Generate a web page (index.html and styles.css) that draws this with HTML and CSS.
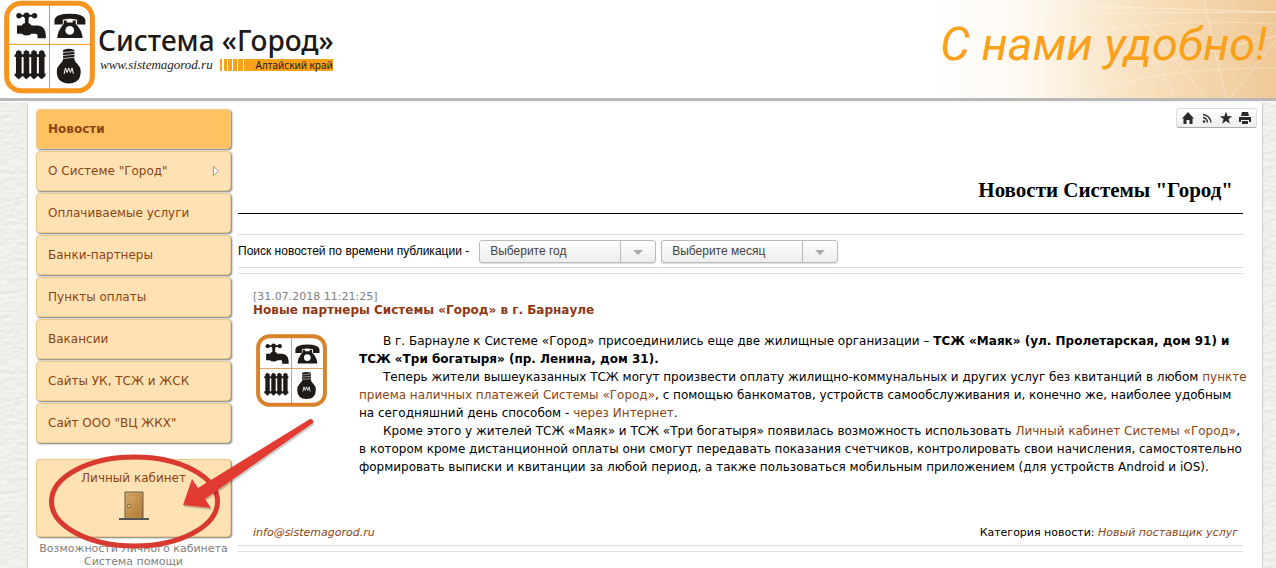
FILE: index.html
```html
<!DOCTYPE html>
<html lang="ru">
<head>
    <meta charset="UTF-8">
    <meta name="viewport" content="width=device-width, initial-scale=1.0">
    <title>Система «Город» - Новости</title>
    <link rel="stylesheet" href="styles.css">
</head>
<body>

<!-- Shared logo -->
<svg class="sprite" width="0" height="0" aria-hidden="true">
    <symbol id="logo" viewBox="12 2 274 280">
        <rect x="20" y="10" width="258" height="264" rx="44" fill="#fff" stroke="currentColor" stroke-width="15"/>
        <path d="M149 14v256M24 134h250" stroke="currentColor" stroke-width="3"/>
        <g fill="#1d1a18">
            <!-- tap -->
            <circle cx="57" cy="48" r="8"/><circle cx="80" cy="47" r="9"/><circle cx="104" cy="48" r="8"/>
            <path d="M57 45h47v6H57zM75 52h11v22H75z"/>
            <path d="M51 77h15q3-7 14-7t15 7h18q24 2 25 29v10h-25v-8q0-7-8-6H95q-5 5-15 5t-14-5H51z"/>
            <!-- phone -->
            <path d="M164 74V60q4-18 46-18t47 18v14h-25V60q-21-6-43 0v14z"/>
            <path d="M192 62h9v6h18v-6h9v10q19 20 21 43h-77q2-23 20-43z"/>
            <!-- radiator -->
            <path d="M44 164h93v8H44zM44 222h93v8H44z"/>
            <path d="M48 156l8-5 9 5v76l-9 7-8-7zM71 156l8-5 9 5v76l-9 7-8-7zM94 156l8-5 9 5v76l-9 7-8-7zM117 156l8-5 9 5v76l-9 7-8-7z"/>
            <!-- bulb -->
            <path d="M190 151q17-7 34 0v29q1 6 10 14 9 9 9 22 0 35-36 36-36-1-36-36 0-13 9-22 9-8 10-14z"/>
        </g>
        <circle cx="210" cy="92" r="13" fill="#fff"/>
        <path d="M188 159l38-4M188 168l38-4M188 177l38-4" stroke="#fff" stroke-width="2"/>
        <path d="M193 223l4-18 5 14 5-14 5 14 5-14 4 18" fill="none" stroke="#fff" stroke-width="3"/>
    </symbol>
</svg>

<header class="header">
    <a class="brand" href="#">
        <svg class="brand-logo"><use href="#logo"/></svg>
        <span class="brand-text">
            <span class="brand-name">Система «Город»</span>
            <span class="brand-sub">
                <span class="brand-url">www.sistemagorod.ru</span>
                <span class="brand-region">Алтайский край</span>
            </span>
        </span>
    </a>
    <div class="slogan">
        <svg class="slogan-lines" viewBox="0 0 376 98" preserveAspectRatio="none" fill="none" stroke="#fff" aria-hidden="true">
            <path d="M90 14l286-2M120 4l256 8M226 0l80 98M232 20l44 78M304 0q8 40 22 98M330 98L376 40M240 66l136-30" opacity=".4"/>
            <path d="M130 42q120-26 246-18M180 98q60-30 196-30" opacity=".3"/>
        </svg>
        <span class="slogan-text">С нами удобно!</span>
    </div>
</header>

<div class="page">
    <aside class="sidebar">
        <nav class="menu">
            <a class="menu-item active" href="#">Новости</a>
            <a class="menu-item" href="#">О Системе "Город"
                <svg width="8" height="12" viewBox="0 0 8 12"><path d="M1.500 1.500v9l5-4.500z" fill="#fff" stroke="#999"/></svg>
            </a>
            <a class="menu-item" href="#">Оплачиваемые услуги</a>
            <a class="menu-item" href="#">Банки-партнеры</a>
            <a class="menu-item" href="#">Пункты оплаты</a>
            <a class="menu-item" href="#">Вакансии</a>
            <a class="menu-item" href="#">Сайты УК, ТСЖ и ЖСК</a>
            <a class="menu-item" href="#">Сайт ООО "ВЦ ЖКХ"</a>
        </nav>

        <div class="cabinet-wrap">
            <a class="cabinet" href="#">
                Личный кабинет
                <svg width="30" height="30" viewBox="0 0 30 30">
                    <defs>
                        <linearGradient id="door" x2="1" y2="1">
                            <stop offset="0" stop-color="#dcb072"/>
                            <stop offset="1" stop-color="#a87430"/>
                        </linearGradient>
                    </defs>
                    <path d="M6 28V1h18v27" fill="url(#door)" stroke="#6b5a45"/>
                    <path d="M9 4h12v22H9z" fill="none" stroke="#c08c48"/>
                    <path d="M0 28h30" stroke="#555" stroke-width="2"/>
                    <circle cx="10" cy="15" r="1.500" fill="#fff3c0" stroke="#8a5e20"/>
                </svg>
            </a>
            <!-- Red pointer over the card -->
            <svg class="pointer" width="280" height="140" viewBox="36 415 280 140" aria-hidden="true">
                <ellipse cx="134.500" cy="501.500" rx="83" ry="44.500" fill="none" stroke="#d93a2f" stroke-width="5"/>
                <path d="M183 505l9-26 6 9 112-69q4 0 3 4L205 499l6 9z" fill="#000" opacity=".2" transform="translate(1 2)"/>
                <path d="M183 505l9-26 6 9 112-69q4 0 3 4L205 499l6 9z" fill="#e23b32"/>
            </svg>
        </div>

        <div class="help">
            <a href="#">Возможности Личного кабинета</a>
            <a href="#">Система помощи</a>
        </div>
    </aside>

    <main class="content">
        <div class="toolbar">
            <a href="#" aria-label="Главная"><svg width="14" height="14" viewBox="0 0 14 14"><path d="M7 1l6 6.500h-1.500V13H8.500V9h-3v4H2.500V7.500H1z"/></svg></a>
            <a href="#" aria-label="RSS"><svg width="14" height="14" viewBox="0 0 14 14"><circle cx="4" cy="10.500" r="1.300"/><path d="M3 6.500q4 .5 4.500 5M3 3.500q7 1 8 8" fill="none" stroke="#2b2b2b" stroke-width="1.300"/></svg></a>
            <a href="#" aria-label="Избранное"><svg width="14" height="14" viewBox="0 0 14 14"><path d="M7 .8l1.600 4.500h4.700L9.500 8.100l1.400 4.600L7 9.900l-3.900 2.800 1.400-4.600L.7 5.300h4.700z"/></svg></a>
            <a href="#" aria-label="Печать"><svg width="14" height="14" viewBox="0 0 14 14"><path d="M4 1h6l1 4H3zM1 6h12v5h-2V9H3v2H1zM4 10h6v3H4z"/></svg></a>
        </div>

        <h1 class="title">Новости Системы "Город"</h1>

        <form class="filter">
            <label for="year">Поиск новостей по времени публикации -</label>
            <select id="year"><option>Выберите год</option></select>
            <select id="month" aria-label="Месяц"><option>Выберите месяц</option></select>
        </form>

        <article class="news">
            <time class="news-date" datetime="2018-07-31T11:21:25">[31.07.2018 11:21:25]</time>
            <h2 class="news-title"><a href="#">Новые партнеры Системы «Город» в г. Барнауле</a></h2>
            <div class="news-body">
                <svg class="news-logo"><use href="#logo"/></svg>
                <div class="news-text">
                    <p>В г. Барнауле к Системе «Город» присоединились еще две жилищные организации – <b>ТСЖ «Маяк» (ул. Пролетарская, дом 91) и<br>
                    ТСЖ «Три богатыря» (пр. Ленина, дом 31).</b></p>
                    <p>Теперь жители вышеуказанных ТСЖ могут произвести оплату жилищно-коммунальных и других услуг без квитанций в любом <a href="#">пункте<br>
                    приема наличных платежей Системы «Город»</a>, с помощью банкоматов, устройств самообслуживания и, конечно же, наиболее удобным<br>
                    на сегодняшний день способом - <a href="#">через Интернет</a>.</p>
                    <p>Кроме этого у жителей ТСЖ «Маяк» и ТСЖ «Три богатыря» появилась возможность использовать <a href="#">Личный кабинет Системы «Город»</a>,<br>
                    в котором кроме дистанционной оплаты они смогут передавать показания счетчиков, контролировать свои начисления, самостоятельно<br>
                    формировать выписки и квитанции за любой период, а также пользоваться мобильным приложением (для устройств Android и iOS).</p>
                </div>
            </div>
            <div class="news-footer">
                <a href="#">info@sistemagorod.ru</a>
                <span>Категория новости: <a href="#">Новый поставщик услуг</a></span>
            </div>
        </article>
        <div class="next-line"></div>
    </main>
</div>

</body>
</html>
```
FILE: styles.css
```css
* {
    box-sizing: border-box;
}
body {
    margin: 0;
    font-family: Verdana, "DejaVu Sans", sans-serif;
    font-size: 12px;
    color: #000;
    background: #eeeee8 url("data:image/svg+xml,%3Csvg xmlns='http://www.w3.org/2000/svg' width='200' height='200'%3E%3Cfilter id='n'%3E%3CfeTurbulence type='fractalNoise' baseFrequency='.12 .25' numOctaves='3' stitchTiles='stitch'/%3E%3CfeDiffuseLighting lighting-color='%23f0f0ea' surfaceScale='.6' diffuseConstant='1.08'%3E%3CfeDistantLight azimuth='250' elevation='68'/%3E%3C/feDiffuseLighting%3E%3C/filter%3E%3Crect width='200' height='200' filter='url(%23n)'/%3E%3C/svg%3E");
}
a {
    color: #8b4513;
    text-decoration: none;
}
.content a:hover, .help a:hover {
    text-decoration: underline;
}
.sprite {
    position: absolute;
}

/* header */
.header {
    display: flex;
    justify-content: space-between;
    height: 101px;
    background: #fff;
    border-bottom: 3px solid #b9b7b7;
    box-shadow: 0 2px 0 #f6f6f4;
}
.brand {
    display: flex;
    gap: 3px;
    padding-left: 4px;
    color: #1d1a18;
}
.brand-logo {
    width: 91px;
    height: 94px;
    color: #f7941e;
}
.brand-text {
    display: flex;
    flex-direction: column;
    padding-top: 23px;
}
.brand-name {
    font-family: "Noto Sans", sans-serif;
    font-size: 28px;
    font-weight: 500;
    line-height: 34px;
}
.brand-sub {
    display: flex;
    gap: 7px;
    align-items: center;
    padding-left: 2px;
}
.brand-url {
    font-family: "Liberation Serif", serif;
    font-size: 13px;
    font-style: italic;
    line-height: 15px;
}
.brand-region {
    width: 113px;
    font-family: "Noto Sans", sans-serif;
    font-size: 10px;
    line-height: 12px;
    text-align: right;
    background: linear-gradient(90deg, #f9a11b 2px, #fff 2px, #fff 4px, #f9a11b 4px, #f9a11b 7px, #fff 7px, #fff 8px, #f9a11b 8px, #f9a11b 12px, #fff 12px, #fff 13px, #f9a11b 13px, #f9a11b 17px, #fff 17px, #fff 18px, #f9a11b 18px, #f9a11b 23px, #fff 23px, #fff 24px, #f9a11b 24px);
}
.slogan {
    position: relative;
    display: flex;
    justify-content: flex-end;
    width: 376px;
    padding: 14px 9px 0 0;
    background: linear-gradient(90deg, #fff 8%, #fdf8ef 35%, #f8e2c1 62%, #efc996);
}
.slogan-lines {
    position: absolute;
    top: 0;
    left: 0;
    width: 100%;
    height: 100%;
}
.slogan-text {
    position: relative;
    font-family: Roboto, sans-serif;
    font-size: 47px;
    font-style: italic;
    line-height: 60px;
    color: #f9a11b;
    white-space: nowrap;
}

/* layout */
.page {
    display: flex;
    gap: 7px;
    margin: 2px 13px 0 27px;
    padding: 6px 5px 0 8px;
    min-height: 480px;
    background: #fff;
    border: 1px solid #ccc;
    border-top: none;
}
.sidebar {
    flex: 0 0 195px;
}
.content {
    flex: 1;
    min-width: 0;
    padding-right: 14px;
}

/* menu */
.menu {
    display: flex;
    flex-direction: column;
    gap: 2px;
}
.menu-item, .cabinet {
    display: flex;
    background: #ffe2b3;
    border: 1px solid #f0c98a;
    border-radius: 4px;
    box-shadow: 1px 1px 2px #777;
}
.menu-item {
    align-items: center;
    justify-content: space-between;
    height: 40px;
    padding: 0 10px 0 11px;
}
.menu-item.active {
    font-weight: bold;
    background: #ffc263;
}
.cabinet-wrap {
    position: relative;
    margin-top: 16px;
}
.cabinet {
    flex-direction: column;
    align-items: center;
    gap: 5px;
    height: 78px;
    padding-top: 11px;
    line-height: 15px;
}
.pointer {
    position: absolute;
    top: -44px;
    left: 0;
    pointer-events: none;
}
.help {
    display: flex;
    flex-direction: column;
    align-items: center;
    padding-top: 5px;
    font-size: 11px;
    line-height: 13px;
    white-space: nowrap;
}
.help a {
    color: #808080;
}

/* content */
.toolbar {
    display: flex;
    gap: 5px;
    width: 81px;
    height: 20px;
    margin: -1px -14px 0 auto;
    padding: 2px 4px;
    background: linear-gradient(#fff, #eee);
    border: 1px solid #ddd;
    border-bottom-color: #aaa;
    border-radius: 3px;
}
.toolbar svg {
    display: block;
    fill: #2b2b2b;
}
.title {
    margin: 50px 0 20px;
    padding: 0 10px 11px 0;
    font-family: "Times New Roman", "Liberation Serif", serif;
    font-size: 21px;
    line-height: 24px;
    text-align: right;
    border-bottom: 1px solid #000;
}
.filter {
    display: flex;
    align-items: center;
    gap: 5px;
    height: 34px;
    font-family: Arial, "Liberation Sans", sans-serif;
    border-top: 1px solid #ddd;
    border-bottom: 1px solid #ddd;
}
.filter label {
    margin-right: 5px;
}
.filter select {
    width: 177px;
    height: 23px;
    padding: 0 36px 0 10px;
    font: inherit;
    color: #444;
    appearance: none;
    background:
        url("data:image/svg+xml,%3Csvg xmlns='http://www.w3.org/2000/svg' width='35' height='21'%3E%3Cpath d='M.5 0v21' stroke='%23bbb'/%3E%3Cpath d='M13 9h10l-5 5z' fill='%23aaa'/%3E%3C/svg%3E") no-repeat right,
        linear-gradient(#fff, #ececec);
    border: 1px solid #bbb;
    border-radius: 3px;
    box-shadow: 0 1px 1px #ddd;
}
.news {
    margin-top: 5px;
    padding: 16px 0 0 15px;
    border-top: 1px solid #ddd;
    border-bottom: 1px solid #ddd;
}
.news-date {
    display: block;
    font-size: 11px;
    line-height: 13px;
    color: #808080;
}
.news-title {
    margin: 0 0 15px;
    font-size: 12px;
    line-height: 14px;
}
.news-title a {
    color: #8b3a13;
}
.news-body {
    display: flex;
    gap: 32px;
    padding-left: 3px;
}
.news-logo {
    flex: 0 0 71px;
    height: 73px;
    margin-top: 2px;
    color: #d9822b;
}
.news-text {
    flex: 1;
    line-height: 18px;
    white-space: nowrap;
}
.news-text p {
    margin: 0;
    text-indent: 24px;
}
.news-footer {
    display: flex;
    justify-content: space-between;
    padding: 50px 5px 5px 0;
    font-size: 11px;
    line-height: 14px;
}
.news-footer a {
    font-style: italic;
}
.next-line {
    margin-top: 5px;
    border-top: 1px solid #ddd;
}
```
